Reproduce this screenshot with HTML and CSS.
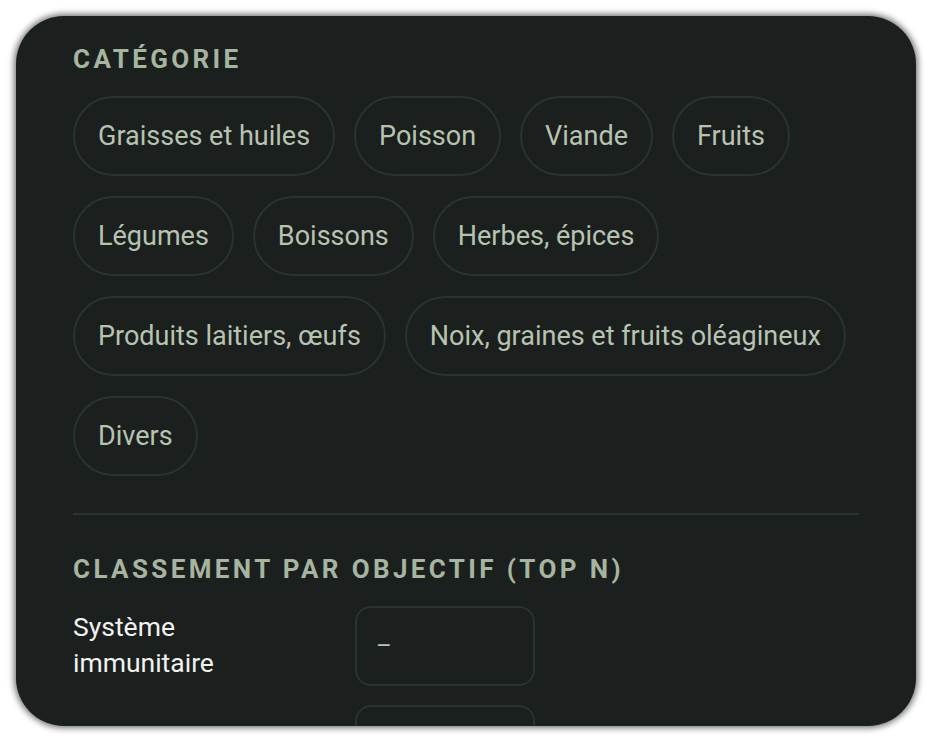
FILE: index.html
```html
<!DOCTYPE html>
<html lang="fr">
<head>
<meta charset="utf-8">
<link rel="stylesheet" href="styles.css">
</head>
<body>
<div class="card">
  <div class="content">
    <section class="section">
      <h2 class="title">CATÉGORIE</h2>
      <div class="chips">
        <span class="chip">Graisses et huiles</span>
        <span class="chip">Poisson</span>
        <span class="chip">Viande</span>
        <span class="chip">Fruits</span>
        <span class="chip">Légumes</span>
        <span class="chip">Boissons</span>
        <span class="chip">Herbes, épices</span>
        <span class="chip">Produits laitiers, œufs</span>
        <span class="chip">Noix, graines et fruits oléagineux</span>
        <span class="chip">Divers</span>
      </div>
    </section>
    <hr class="divider">
    <section class="section">
      <h2 class="title title2">CLASSEMENT PAR OBJECTIF (TOP N)</h2>
      <div class="rows">
        <div class="label">Système<br>immunitaire</div>
        <div class="field"><span class="dash">–</span></div>
        <div class="label"></div>
        <div class="field"></div>
      </div>
    </section>
  </div>
</div>
</body>
</html>
```
FILE: styles.css
```css
html, body {
  margin: 0;
  padding: 0;
  background: #ffffff;
}
body {
  width: 932px;
  height: 742px;
  overflow: hidden;
  font-family: Roboto, "Noto Sans", sans-serif;
}
.card {
  margin: 16px;
  height: 710px;
  background: #1b1f1e;
  border-radius: 48px;
  box-shadow: 0 0 6px 2px rgba(0, 0, 0, 0.55);
  overflow: hidden;
}
.content {
  padding: 25px 57px 0 57px;
}
.title {
  margin: 0;
  font-size: 26px;
  font-weight: 700;
  letter-spacing: 0.13em;
  line-height: 36px;
  color: #a6b5a0;
}
.chips {
  display: flex;
  flex-wrap: wrap;
  gap: 20px 19px;
  margin-top: 19px;
}
.chip {
  display: inline-flex;
  align-items: center;
  height: 80px;
  box-sizing: border-box;
  padding: 0 23px;
  border: 2px solid #2b3230;
  border-radius: 40px;
  font-size: 27px;
  color: #b7c3b1;
}
.divider {
  border: 0;
  height: 2px;
  background: #2b3230;
  margin: 37px 0 0 0;
}
.title2 {
  margin-top: 36px;
}
.rows {
  display: grid;
  grid-template-columns: 282px 180px;
  row-gap: 19px;
  margin-top: 19px;
}
.label {
  font-size: 26.5px;
  line-height: 36px;
  color: #f1f2ef;
  padding-top: 3px;
}
.field {
  height: 80px;
  box-sizing: border-box;
  border: 2px solid #2b3230;
  border-radius: 16px;
  display: flex;
  align-items: center;
  padding-left: 19px;
}
.dash {
  color: #b7c3b1;
  font-size: 24px;
}
```
